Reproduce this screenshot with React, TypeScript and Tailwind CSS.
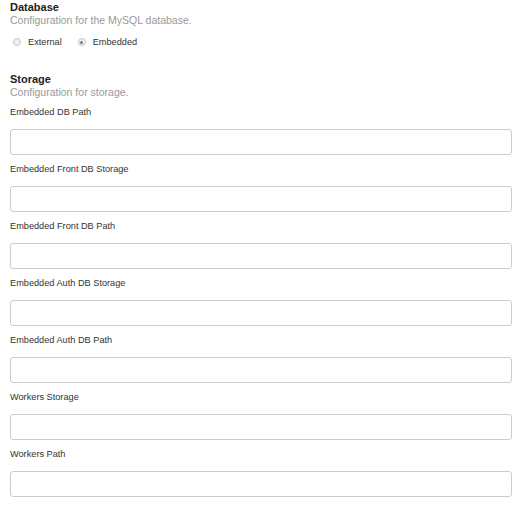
const fields = [
  "Embedded DB Path",
  "Embedded Front DB Storage",
  "Embedded Front DB Path",
  "Embedded Auth DB Storage",
  "Embedded Auth DB Path",
  "Workers Storage",
  "Workers Path",
];

const Radio = ({ checked, label }: { checked?: boolean; label: string }) => (
  <label className="flex items-center gap-[7px]">
    <span className="flex h-[8px] w-[8px] items-center justify-center rounded-full border border-[#c4c4c4] bg-[#f0f0f0]">
      {checked && <span className="h-[3px] w-[3px] rounded-full bg-[#777]" />}
    </span>
    <span>{label}</span>
  </label>
);

const App = () => {
  return (
    <div className="w-[520px] bg-white px-[10px] font-['Liberation_Sans',Arial,sans-serif] text-[#333]">
      <div className="pt-[1px]">
        <div className="text-[11px] font-bold leading-[13px] text-[#222]">Database</div>
        <div className="text-[10.5px] leading-[12px] text-[#999]">
          Configuration for the MySQL database.
        </div>
        <div className="mt-[10px] flex items-center gap-[16px] pl-[3px] text-[9.2px] leading-[12px]">
          <Radio label="External" />
          <Radio checked label="Embedded" />
        </div>
      </div>

      <div className="mt-[25px]">
        <div className="text-[11px] font-bold leading-[13px] text-[#222]">Storage</div>
        <div className="text-[10.5px] leading-[12px] text-[#999]">
          Configuration for storage.
        </div>
        {fields.map((f) => (
          <div key={f}>
            <div className="mt-[7px] mb-[9px] text-[9.2px] leading-[15px]">{f}</div>
            <input
              type="text"
              className="block h-[26px] w-[502px] rounded-[3px] border border-[#ccc] bg-white"
            />
          </div>
        ))}
      </div>
    </div>
  );
};

export default App;
